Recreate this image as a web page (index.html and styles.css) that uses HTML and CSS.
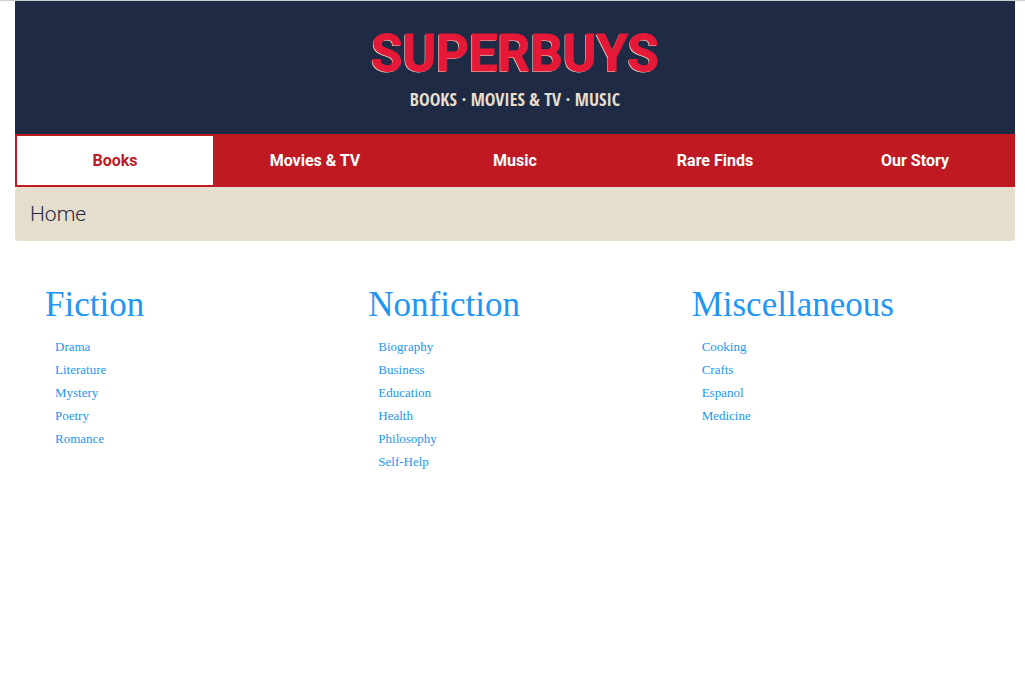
FILE: index.html
```html
<!DOCTYPE html>
<html lang="en">
<head>
<meta charset="utf-8">
<meta name="viewport" content="width=device-width, initial-scale=1">
<title>Superbuys</title>
<link rel="stylesheet" href="styles.css">
</head>
<body>
<div class="page">
  <header class="banner">
    <div class="logo">SUPERBUYS</div>
    <div class="tagline">BOOKS · MOVIES &amp; TV · MUSIC</div>
  </header>
  <nav class="tabs">
    <a class="tab active" href="#books">Books</a>
    <a class="tab" href="#movies">Movies &amp; TV</a>
    <a class="tab" href="#music">Music</a>
    <a class="tab" href="#rare">Rare Finds</a>
    <a class="tab" href="#story">Our Story</a>
  </nav>
  <div class="crumbs"><a href="#home">Home</a></div>
  <main class="columns">
    <section class="column">
      <h2><a href="#fiction">Fiction</a></h2>
      <ul>
        <li><a href="#drama">Drama</a></li>
        <li><a href="#literature">Literature</a></li>
        <li><a href="#mystery">Mystery</a></li>
        <li><a href="#poetry">Poetry</a></li>
        <li><a href="#romance">Romance</a></li>
      </ul>
    </section>
    <section class="column">
      <h2><a href="#nonfiction">Nonfiction</a></h2>
      <ul>
        <li><a href="#biography">Biography</a></li>
        <li><a href="#business">Business</a></li>
        <li><a href="#education">Education</a></li>
        <li><a href="#health">Health</a></li>
        <li><a href="#philosophy">Philosophy</a></li>
        <li><a href="#self-help">Self-Help</a></li>
      </ul>
    </section>
    <section class="column">
      <h2><a href="#misc">Miscellaneous</a></h2>
      <ul>
        <li><a href="#cooking">Cooking</a></li>
        <li><a href="#crafts">Crafts</a></li>
        <li><a href="#espanol">Espanol</a></li>
        <li><a href="#medicine">Medicine</a></li>
      </ul>
    </section>
  </main>
</div>
</body>
</html>
```
FILE: styles.css
```css
* { box-sizing: border-box; }
body {
  margin: 0;
  border-top: 1px solid #ccd0d0;
  background: #fff;
  font-family: Roboto, "Liberation Sans", sans-serif;
}
a { color: inherit; text-decoration: none; }
.page { max-width: 1170px; margin: 0 auto; padding: 0 10px 0 15px; }
.banner {
  display: flex;
  flex-direction: column;
  align-items: center;
  padding: 22px 0 21px;
  background: #1f2a44;
}
.logo {
  font: 700 51px/62px Roboto, sans-serif;
  color: #e51937;
  -webkit-text-stroke: 1px #e51937;
  text-shadow: -1px 1px 0 #e6decd;
}
.tagline {
  font: 700 18px/28px "Liberation Sans Narrow", "Open Sans Condensed", "DejaVu Sans Condensed", sans-serif;
  color: #e6decd;
}
.tabs {
  display: grid;
  grid-template-columns: repeat(5, 1fr);
  background: #bf1924;
}
.tab {
  padding: 13px 0 12px;
  border: 2px solid #bf1924;
  font-size: 16px;
  font-weight: 700;
  line-height: 24px;
  text-align: center;
  color: #fff;
}
.tab.active { background: #fff; color: #bf1924; }
.crumbs {
  padding: 12px 15px;
  border-radius: 4px;
  background: #e6decd;
  font-size: 21px;
  font-weight: 300;
  line-height: 30px;
  color: #1f2a44;
}
.columns {
  display: grid;
  grid-template-columns: repeat(3, 1fr);
  padding: 42px 15px;
  color: #2196f3;
  font-family: "Liberation Serif", serif;
}
.column { padding: 0 15px; }
.column h2 { margin: 0 0 8px; font-size: 35px; font-weight: 400; line-height: 44px; }
.column ul { margin: 0; padding: 0 10px; list-style: none; }
.column li { font-size: 13px; line-height: 23px; }
```
